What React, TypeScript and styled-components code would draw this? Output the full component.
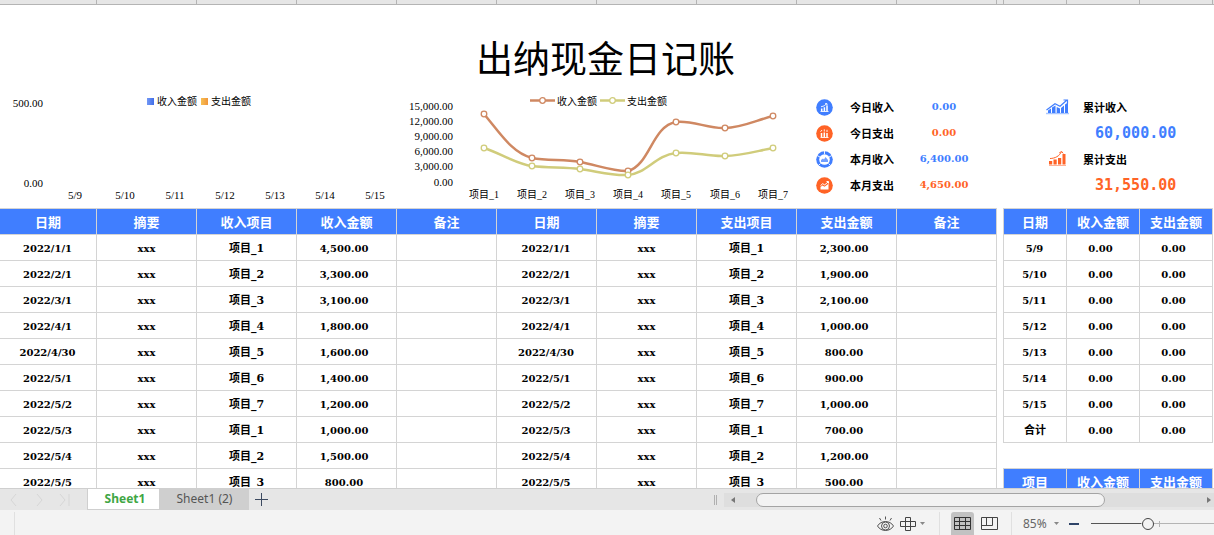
import React from 'react';
import styled, { createGlobalStyle, css } from 'styled-components';

const CJK = '"Noto Sans CJK SC", sans-serif';
const BLUE = '#407eff';
const ORANGE = '#ff6326';
const LINE = '#d4d4d4';

const GlobalStyle = createGlobalStyle`
  * { box-sizing: border-box; }
  html, body { margin: 0; padding: 0; }
  body { font-family: "DejaVu Serif", ${CJK}; color: #000; background: #fff; }
  button, select, input { font: inherit; color: inherit; margin: 0; }
`;

const Window = styled.div`
  display: flex;
  flex-direction: column;
  height: 100vh;
  overflow: hidden;
`;

const columns = css`
  display: grid;
  grid-template-columns: minmax(0, 997fr) 6px minmax(0, 210fr) 1px;
`;

const HeaderStrip = styled.div`
  ${columns}
  flex: none;
  height: 5px;
  background: #e6e6e6;
  border-bottom: 1px solid #b4b4b4;
`;

const StripGroup = styled.div<{ $first: number; $leftEdge?: boolean }>`
  display: flex;
  border-left: ${(p) => (p.$leftEdge ? '1px solid #b4b4b4' : 'none')};
  span { flex: 1; border-right: 1px solid #b4b4b4; }
  span:first-child { flex: none; width: ${(p) => p.$first}px; }
`;

const Sheet = styled.main`
  flex: 1;
  min-height: 0;
  overflow: hidden;
`;

const Title = styled.h1`
  margin: 0;
  padding: 26px 3px 0 0;
  height: 88px;
  font: 400 37px/52px ${CJK};
  text-align: center;
`;

const Dashboard = styled.section`
  display: grid;
  grid-template-columns: 400fr 400fr 200fr 214fr;
  height: 115px;
`;

const ChartSvg = styled.svg`
  display: block;
  width: 100%;
  height: 115px;
  font: 11px "Liberation Serif", ${CJK};
  .cjk { font-size: 10px; }
`;

const StatList = styled.div`
  padding-top: 1px;
`;

const StatRow = styled.div`
  display: grid;
  grid-template-columns: 50px 46px 96px;
  align-items: center;
  height: 26px;
  svg { display: block; margin-left: 16px; }
`;

const StatLabel = styled.span`
  font: 700 11px/16px ${CJK};
`;

const StatValue = styled.span<{ $color: string }>`
  font-size: 10px;
  font-weight: 700;
  line-height: 16px;
  text-align: center;
  color: ${(p) => p.$color};
`;

const TotalHead = styled.div`
  display: flex;
  align-items: center;
  height: 26px;
  padding-left: 46px;
  gap: 13px;
`;

const TotalValue = styled.div<{ $color: string }>`
  padding-left: 95px;
  font-family: "DejaVu Sans Mono", monospace;
  font-size: 15px;
  font-weight: 700;
  line-height: 26px;
  color: ${(p) => p.$color};
`;

const Tables = styled.section`
  ${columns}
  align-items: start;
`;

const RightTables = styled.div`
  grid-column: 3;
  display: flex;
  flex-direction: column;
  gap: 25px;
`;

const Grid = styled.table<{ $leftEdge?: boolean }>`
  width: 100%;
  table-layout: fixed;
  border-collapse: separate;
  border-spacing: 0;
  border-top: 1px solid ${LINE};
  border-left: ${(p) => (p.$leftEdge ? `1px solid ${LINE}` : 'none')};
`;

const HeadCell = styled.th<{ $first?: number }>`
  width: ${(p) => (p.$first ? `${p.$first}px` : 'auto')};
  height: 26px;
  padding: 1px 0 0;
  border-right: 1px solid ${LINE};
  border-bottom: 1px solid ${LINE};
  background: ${BLUE};
  color: #fff;
  font: 700 13px/20px ${CJK};
  white-space: nowrap;
`;

type Kind = 'date' | 'amount' | 'item' | 'note';

const Cell = styled.td<{ $kind: Kind }>`
  height: 26px;
  padding: 2px 0 0;
  border-right: 1px solid ${LINE};
  border-bottom: 1px solid ${LINE};
  background: #fff;
  text-align: center;
  white-space: nowrap;
  font-size: 10px;
  font-weight: 700;
  line-height: 16px;
  ${(p) => p.$kind === 'date' && css`padding-right: 1px;`}
  ${(p) => p.$kind === 'amount' && css`padding-right: 5px;`}
  ${(p) => p.$kind === 'item' && css`font-size: 11px;`}
  ${(p) => p.$kind === 'note' && css`padding-top: 3px;`}
`;

const TabBar = styled.nav`
  flex: none;
  display: flex;
  height: 22px;
  background: #e6e6e6;
  border-top: 1px solid #cfcfcf;
  font: 12px/20px "Noto Sans", sans-serif;
`;

const Pager = styled.div`
  width: 87px;
  padding-left: 7px;
  display: flex;
  align-items: center;
  gap: 10px;
`;

const PlainButton = styled.button`
  display: flex;
  align-items: center;
  justify-content: center;
  padding: 0;
  border: 0;
  background: none;
`;

const Tab = styled.button<{ $active?: boolean }>`
  padding: 0 0 0 ${(p) => (p.$active ? 3 : 1)}px;
  border: 0;
  width: ${(p) => (p.$active ? 72 : 90)}px;
  background: ${(p) => (p.$active ? '#fff' : '#cfcfcf')};
  color: ${(p) => (p.$active ? '#3fa644' : '#555')};
  font-weight: ${(p) => (p.$active ? 700 : 400)};
  border-left: ${(p) => (p.$active ? '1px solid #cfcfcf' : 'none')};
  border-bottom: 1px solid #cfcfcf;
`;

const AddButton = styled(PlainButton)`
  width: 24px;
`;

const ScrollArea = styled.div`
  margin-left: auto;
  width: 500px;
  display: flex;
  align-items: center;
`;

const ScrollTrack = styled.div`
  flex: 1;
  display: flex;
  align-items: center;
  height: 14px;
  margin-left: 7px;
  padding: 0 3px 0 7px;
  background: #dedede;
`;

const ScrollThumb = styled.div`
  width: 349px;
  height: 14px;
  margin: 0 auto 0 21px;
  border: 1px solid #a4a4a4;
  border-radius: 7px;
  background: #f3f3f3;
`;

const StatusBar = styled.footer`
  flex: none;
  display: flex;
  align-items: center;
  height: 25px;
  background: #f3f3f3;
  padding-left: 14px;
  padding-top: 2px;
`;

const Rule = styled.i<{ $gap?: string }>`
  width: 1px;
  height: 23px;
  background: #e0e0e0;
  margin: ${(p) => p.$gap || '0'};
`;

const Tools = styled.div`
  display: flex;
  align-items: center;
  margin-left: auto;
  height: 23px;
`;

const EyeButton = styled(PlainButton)`
  margin-right: 6px;
`;

const ViewButton = styled(PlainButton)<{ $on?: boolean }>`
  width: 23px;
  height: 23px;
  border-radius: 3px 3px 0 0;
  background: ${(p) => (p.$on ? '#c2c2c2' : 'none')};
  & + & { margin-left: 4px; }
`;

const Zoom = styled(PlainButton)`
  justify-content: space-between;
  width: 36px;
  color: #666;
  font: 12px/18px "Noto Sans", sans-serif;
`;

const ZoomSlider = styled.input`
  appearance: none;
  width: 123px;
  height: 14px;
  margin-left: 11px;
  background:
    linear-gradient(#b4b4b4, #b4b4b4) 68px 50% / 1px 6px no-repeat,
    linear-gradient(90deg, #555 50px, #b4b4b4 50px) 0 50% / 100% 1px no-repeat;
  &::-webkit-slider-thumb {
    appearance: none;
    width: 12px;
    height: 12px;
    border: 1px solid #444;
    border-radius: 50%;
    background: #f3f3f3;
  }
`;

const Caret = () => (
  <svg width="5" height="3" viewBox="0 0 5 3"><path d="M0 0h5L2.500 3z" fill="#888" /></svg>
);

const dates = ['2022/1/1', '2022/2/1', '2022/3/1', '2022/4/1', '2022/4/30', '2022/5/1', '2022/5/2', '2022/5/3', '2022/5/4', '2022/5/5'];
const items = [1, 2, 3, 4, 5, 6, 7, 1, 2, 3];
const income = ['4,500.00', '3,300.00', '3,100.00', '1,800.00', '1,600.00', '1,400.00', '1,200.00', '1,000.00', '1,500.00', '800.00'];
const expense = ['2,300.00', '1,900.00', '2,100.00', '1,000.00', '800.00', '900.00', '1,000.00', '700.00', '1,200.00', '500.00'];
const days = ['5/9', '5/10', '5/11', '5/12', '5/13', '5/14', '5/15'];

const BarChart = () => (
  <ChartSvg viewBox="0 0 400 115" preserveAspectRatio="xMinYMin meet">
    <defs>
      <linearGradient id="blueKey"><stop offset="0" stopColor="#7398f5" /><stop offset="1" stopColor="#416ee8" /></linearGradient>
      <linearGradient id="orangeKey"><stop offset="0" stopColor="#f7c053" /><stop offset="1" stopColor="#f0953b" /></linearGradient>
    </defs>
    <rect x="147" y="5" width="7" height="7" fill="url(#blueKey)" />
    <text className="cjk" x="157" y="12">收入金额</text>
    <rect x="201" y="5" width="7" height="7" fill="url(#orangeKey)" />
    <text className="cjk" x="211" y="12">支出金额</text>
    <text x="43" y="14" textAnchor="end">500.00</text>
    <text x="43" y="94" textAnchor="end">0.00</text>
    {days.map((d, i) => <text key={d} x={75 + i * 50} y="106" textAnchor="middle">{d}</text>)}
  </ChartSvg>
);

const xs = [84, 132, 180, 228, 276, 325, 373];
const inY = [21, 65, 69, 78, 29, 35, 23];
const outY = [55, 73, 76, 82, 60, 63, 55];

const LineChart = () => (
  <ChartSvg viewBox="0 0 400 115" preserveAspectRatio="xMinYMin meet">
    {['15,000.00', '12,000.00', '9,000.00', '6,000.00', '3,000.00', '0.00'].map((t, i) => (
      <text key={t} x="53" y={17 + i * 15 + (i === 5 ? 1 : 0)} textAnchor="end">{t}</text>
    ))}
    <g fill="none" strokeWidth="2.500">
      <path stroke="#cf8862" d="M84 21C100 40 112 60 132 65C148 68 164 66 180 69C196 72 216 79 228 78C250 72 252 33 276 29C292 27 309 36 325 35C341 35 357 27 373 23" />
      <path stroke="#d0cc7b" d="M84 55C100 60 116 71 132 73C148 75 164 74 180 76C196 78 212 83 228 82C246 81 256 62 276 60C292 58 309 64 325 63C341 63 357 58 373 55" />
      <path stroke="#cf8862" d="M130 7.500h25" />
      <path stroke="#d0cc7b" d="M200 7.500h25" />
    </g>
    <g fill="#fff" strokeWidth="1.300">
      {xs.map((x, i) => <circle key={x} cx={x} cy={inY[i]} r="2.800" stroke="#cf8862" />)}
      {xs.map((x, i) => <circle key={x} cx={x} cy={outY[i]} r="2.800" stroke="#d0cc7b" />)}
      <circle cx="142.500" cy="7.500" r="2.800" stroke="#cf8862" />
      <circle cx="212.500" cy="7.500" r="2.800" stroke="#d0cc7b" />
    </g>
    <text className="cjk" x="157" y="12">收入金额</text>
    <text className="cjk" x="227" y="12">支出金额</text>
    {xs.map((x, i) => <text className="cjk" key={x} x={x} y="105" textAnchor="middle">项目_{i + 1}</text>)}
  </ChartSvg>
);

const StatIcon = ({ kind }: { kind: number }) => (
  <svg width="17" height="17" viewBox="0 0 17 17">
    <circle cx="8.500" cy="8.500" r="8.300" fill={kind % 2 ? ORANGE : BLUE} />
    {kind === 0 && <g stroke="#fff" fill="none"><path strokeWidth="1.500" d="M5.700 12V9.500M8.400 12V8.300M11 12V6.500" /><path strokeWidth=".9" d="M5 7.800Q8.500 7.500 10.800 4.600M9 4.700h2v1.700M4.500 12.500h8" /></g>}
    {kind === 1 && <g stroke="#fff" fill="none"><path strokeWidth="1.500" d="M5.500 12V8M8.300 12V7.500M11 12V8" /><path strokeWidth=".9" d="M4.500 6.800L6 5M8.300 6.500V4.300M11 7V4.800M4.500 12.500h8" /></g>}
    {kind === 2 && <g><circle cx="8.500" cy="8.500" r="5.300" fill="#fff" /><path d="M5 11V9l2-1.500 1 1L9.500 6l2.500 3v2z" fill={BLUE} opacity=".75" /><path d="M8.500 0v3M1 4.500l3 1.500M16 4.500l-3 1.500M2.500 14.500l2-2M14.500 14.500l-2-2" stroke="#fff" strokeWidth=".9" /></g>}
    {kind === 3 && <g><path d="M4.500 12.500V10l2-1.500 2 1.200 4-3v5.800z" fill="#fff" /><path d="M4.500 8.700l2.200-2 2 1.200 3.500-3M10.500 4.500h2v2" stroke="#fff" fill="none" /></g>}
  </svg>
);

const stats = [
  ['今日收入', '0.00'],
  ['今日支出', '0.00'],
  ['本月收入', '6,400.00'],
  ['本月支出', '4,650.00'],
];

const IncomeIcon = () => (
  <svg width="24" height="16" viewBox="0 0 24 16">
    <path d="M0 14.500h23" stroke="#a9c6ff" strokeWidth="1.500" />
    <path d="M2 14v-2.500l3-2V14zM6 14V8.500L9.500 6.500V14zM10.700 14V8l3.300 1.500V14zM15 14V9l3-2.500V14zM19 14V5.500L22 3.500V14z" fill={BLUE} />
    <path d="M.5 11L9 4.800l5 2.400L21 1M17.500 1h4v3.500" stroke={BLUE} fill="none" strokeWidth="1.200" />
  </svg>
);

const ExpenseIcon = () => (
  <svg width="24" height="16" viewBox="0 0 24 16">
    <path d="M3 14.500h17" stroke="#ffb195" />
    <path d="M3 13.500V10h3.200v3.500zM7.500 13.500v-5h3.200v5zM12 13.500V7h3.200v6.500zM16.500 13.500V3h3v10.500z" fill={ORANGE} />
    <path d="M4 7.500C9 7.500 13.500 5 15.500 .8M13.200 2L15.600.400l1.600 2" stroke={ORANGE} fill="none" />
  </svg>
);

const Head = ({ labels, first }: { labels: string[]; first: number }) => (
  <thead>
    <tr>{labels.map((l, i) => <HeadCell key={i} scope="col" $first={i ? undefined : first}>{l}</HeadCell>)}</tr>
  </thead>
);

export default function App() {
  return (
    <Window>
      <GlobalStyle />
      <HeaderStrip aria-hidden="true">
        <StripGroup $first={97}>{Array.from({ length: 10 }, (_, i) => <span key={i} />)}</StripGroup>
        <div />
        <StripGroup $first={63} $leftEdge><span /><span /><span /></StripGroup>
      </HeaderStrip>

      <Sheet>
        <Title>出纳现金日记账</Title>
        <Dashboard>
          <BarChart />
          <LineChart />
          <StatList>
            {stats.map(([label, value], i) => (
              <StatRow key={label}>
                <StatIcon kind={i} />
                <StatLabel>{label}</StatLabel>
                <StatValue $color={i % 2 ? ORANGE : BLUE}>{value}</StatValue>
              </StatRow>
            ))}
          </StatList>
          <StatList>
            <TotalHead><IncomeIcon /><StatLabel>累计收入</StatLabel></TotalHead>
            <TotalValue $color={BLUE}>60,000.00</TotalValue>
            <TotalHead><ExpenseIcon /><StatLabel>累计支出</StatLabel></TotalHead>
            <TotalValue $color={ORANGE}>31,550.00</TotalValue>
          </StatList>
        </Dashboard>

        <Tables>
          <Grid>
            <Head first={97} labels={['日期', '摘要', '收入项目', '收入金额', '备注', '日期', '摘要', '支出项目', '支出金额', '备注']} />
            <tbody>
              {dates.map((d, i) => (
                <tr key={d}>
                  {[income[i], expense[i]].map((amount, side) => (
                    <React.Fragment key={side}>
                      <Cell $kind="date">{d}</Cell>
                      <Cell $kind="note">xxx</Cell>
                      <Cell $kind="item">项目_{items[i]}</Cell>
                      <Cell $kind="amount">{amount}</Cell>
                      <Cell $kind="note" />
                    </React.Fragment>
                  ))}
                </tr>
              ))}
            </tbody>
          </Grid>
          <RightTables>
            <Grid $leftEdge>
              <Head first={63} labels={['日期', '收入金额', '支出金额']} />
              <tbody>
                {[...days, '合计'].map((d) => (
                  <tr key={d}>
                    <Cell $kind={d === '合计' ? 'item' : 'date'}>{d}</Cell>
                    <Cell $kind="amount">0.00</Cell>
                    <Cell $kind="amount">0.00</Cell>
                  </tr>
                ))}
              </tbody>
            </Grid>
            <Grid $leftEdge>
              <Head first={63} labels={['项目', '收入金额', '支出金额']} />
            </Grid>
          </RightTables>
        </Tables>
      </Sheet>

      <TabBar>
        <Pager>
          {['M9 4L4 10l5 6', 'M5 4l5 6-5 6', 'M3 4l5 6-5 6M12 4v12'].map((d, i) => (
            <PlainButton key={d} aria-label={['上一个', '下一个', '最后一个'][i]}>
              <svg width="15" height="20" viewBox="0 0 15 20"><path d={d} fill="none" stroke="#d6d6d6" /></svg>
            </PlainButton>
          ))}
        </Pager>
        <Tab $active>Sheet1</Tab>
        <Tab>Sheet1 (2)</Tab>
        <AddButton aria-label="新建工作表">
          <svg width="13" height="13" viewBox="0 0 13 13"><path d="M6.500 0v13M0 6.500h13" stroke="#3c4a60" /></svg>
        </AddButton>
        <ScrollArea>
          <svg width="3" height="10" viewBox="0 0 3 10"><path d="M.5 0v10M2.500 0v10" stroke="#b0b0b0" /></svg>
          <ScrollTrack>
            <svg width="4" height="6" viewBox="0 0 4 6"><path d="M4 0v6L0 3z" fill="#777" /></svg>
            <ScrollThumb />
            <svg width="4" height="6" viewBox="0 0 4 6"><path d="M0 0v6l4-3z" fill="#777" /></svg>
          </ScrollTrack>
        </ScrollArea>
      </TabBar>

      <StatusBar>
        <Rule />
        <Tools>
          <EyeButton aria-label="护眼模式">
            <svg width="17" height="16" viewBox="0 0 17 16" fill="none" stroke="#555">
              <path d="M.5 10C4 4 13 4 16.500 10C13 16 4 16 .5 10z" />
              <circle cx="8.500" cy="10" r="4" /><circle cx="8.500" cy="10" r="1.800" />
              <path d="M8.500 .5v3M2.500 2l1.500 2.500M14.500 2l-1.500 2.500" />
            </svg>
          </EyeButton>
          <PlainButton aria-label="阅读模式">
            <svg width="27" height="15" viewBox="2 0 27 15" fill="none" stroke="#444">
              <path d="M12.500 1.500h-5v13h5zM2.500 5.500v5h15v-5zM7.500 5.500v5M12.500 5.500v5" />
              <path d="M22 6h5l-2.500 3z" fill="#888" stroke="none" />
            </svg>
          </PlainButton>
          <Rule $gap="0 11px 0 12px" />
          <ViewButton $on aria-label="普通视图">
            <svg width="17" height="15" viewBox="0 0 17 15" fill="none" stroke="#333">
              <path d="M.5 1.500h16v12H.5zM.5 5.500h16M.5 9.500h16M5.500 1.500v12M11.500 1.500v12" />
            </svg>
          </ViewButton>
          <ViewButton aria-label="分页预览">
            <svg width="17" height="15" viewBox="0 0 17 15" fill="none" stroke="#444">
              <path d="M.5 1.500h16v12H.5zM.5 9.500h11M5.500 1.500v8M11.500 1.500v8" />
            </svg>
          </ViewButton>
          <Rule $gap="0 11px 0 10px" />
          <Zoom>85% <Caret /></Zoom>
          <PlainButton aria-label="缩小">
            <svg width="21" height="10" viewBox="0 0 21 10"><path d="M10 5h10" stroke="#2f4468" strokeWidth="2" /></svg>
          </PlainButton>
          <ZoomSlider type="range" aria-label="缩放" min={0} max={100} defaultValue={46} />
        </Tools>
      </StatusBar>
    </Window>
  );
}
